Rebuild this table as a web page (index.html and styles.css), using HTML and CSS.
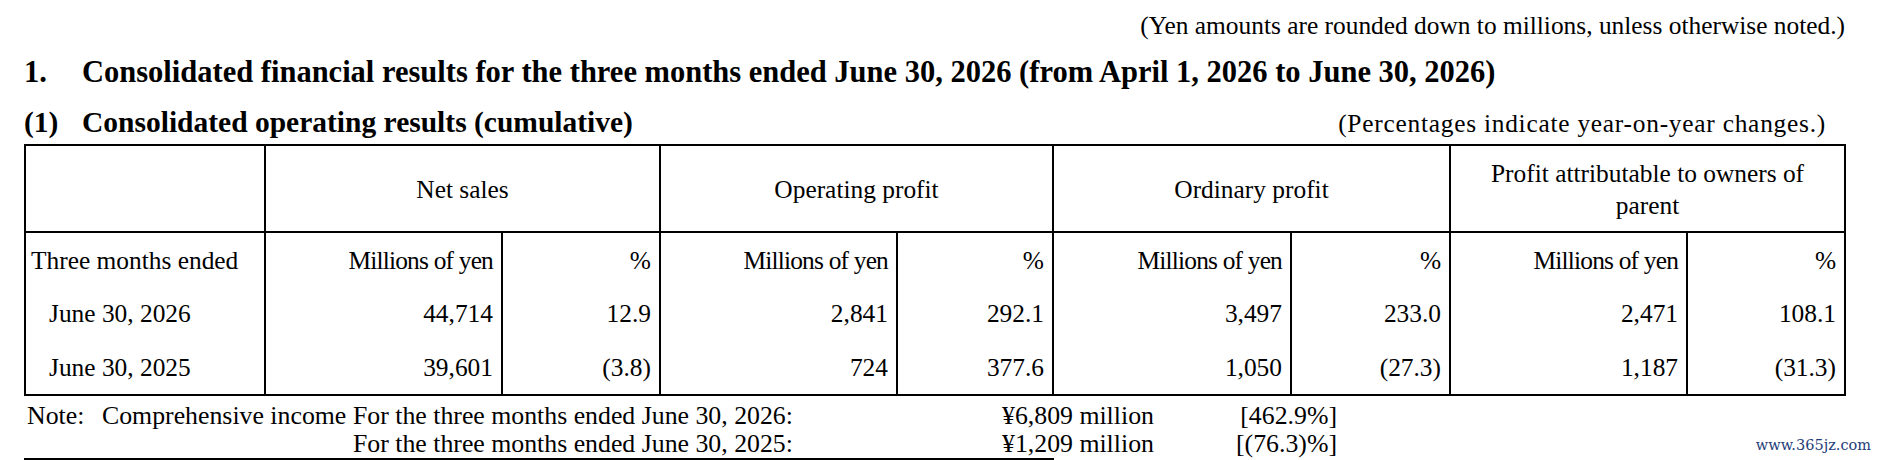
FILE: index.html
```html
<!DOCTYPE html>
<html lang="en">
<head>
<meta charset="utf-8">
<title>Consolidated financial results</title>
<link rel="stylesheet" href="styles.css">
</head>
<body>
<div class="page">
  <p class="unit-note">(Yen amounts are rounded down to millions, unless otherwise noted.)</p>
  <h1 class="heading h1"><span class="num">1.</span>Consolidated financial results for the three months ended June 30, 2026 (from April 1, 2026 to June 30, 2026)</h1>
  <div class="sub-row">
    <h2 class="heading h2"><span class="num">(1)</span>Consolidated operating results (cumulative)</h2>
    <span class="pct-note">(Percentages indicate year-on-year changes.)</span>
  </div>
  <table class="results">
    <colgroup>
      <col class="c-label">
      <col class="c-a1"><col class="c-p1">
      <col class="c-a2"><col class="c-p2">
      <col class="c-a3"><col class="c-p3">
      <col class="c-a4"><col class="c-p4">
    </colgroup>
    <thead>
      <tr class="r-head">
        <th></th>
        <th colspan="2">Net sales</th>
        <th colspan="2">Operating profit</th>
        <th colspan="2">Ordinary profit</th>
        <th colspan="2">Profit attributable to owners of<br>parent</th>
      </tr>
    </thead>
    <tbody>
      <tr class="r-sub">
        <td class="lbl">Three months ended</td>
        <td class="num-cell unit">Millions of yen</td><td class="num-cell">%</td>
        <td class="num-cell unit">Millions of yen</td><td class="num-cell">%</td>
        <td class="num-cell unit">Millions of yen</td><td class="num-cell">%</td>
        <td class="num-cell unit">Millions of yen</td><td class="num-cell">%</td>
      </tr>
      <tr class="r-data">
        <td class="lbl date">June 30, 2026</td>
        <td class="num-cell">44,714</td><td class="num-cell">12.9</td>
        <td class="num-cell">2,841</td><td class="num-cell">292.1</td>
        <td class="num-cell">3,497</td><td class="num-cell">233.0</td>
        <td class="num-cell">2,471</td><td class="num-cell">108.1</td>
      </tr>
      <tr class="r-data">
        <td class="lbl date">June 30, 2025</td>
        <td class="num-cell">39,601</td><td class="num-cell">(3.8)</td>
        <td class="num-cell">724</td><td class="num-cell">377.6</td>
        <td class="num-cell">1,050</td><td class="num-cell">(27.3)</td>
        <td class="num-cell">1,187</td><td class="num-cell">(31.3)</td>
      </tr>
    </tbody>
  </table>
  <div class="note">
    <span>Note:</span>
    <span>Comprehensive income</span>
    <span>For the three months ended June 30, 2026:</span>
    <span>¥6,809 million</span>
    <span class="br">[462.9%]</span>
    <span></span>
    <span></span>
    <span>For the three months ended June 30, 2025:</span>
    <span>¥1,209 million</span>
    <span class="br">[(76.3)%]</span>
  </div>
  <div class="watermark">www.365jz.com</div>
</div>
</body>
</html>
```

FILE: styles.css
```css
html, body {
  margin: 0;
  padding: 0;
  background: #ffffff;
}

body {
  font-family: "Liberation Serif", "Times New Roman", serif;
  color: #000000;
  font-size: 25.4px;
}

.page {
  position: relative;
  width: 1878px;
  height: 460px;
  padding: 10px 0 0 24px;
  box-sizing: border-box;
  overflow: hidden;
}

.unit-note {
  margin: 0;
  width: 1821px;
  text-align: right;
  line-height: 30px;
}

.heading {
  margin: 0;
  font-weight: bold;
  padding-left: 0;
}

.heading .num {
  display: inline-block;
  width: 58px;
}

.h1 {
  margin-top: 12px;
  font-size: 30.5px;
  line-height: 40px;
}

.h2 {
  font-size: 29.5px;
  line-height: 29px;
}

.sub-row {
  display: flex;
  justify-content: space-between;
  align-items: baseline;
  height: 29px;
  width: 1802px;
  margin-top: 16px;
}

.pct-note {
  line-height: 29px;
  letter-spacing: 0.75px;
}

.results {
  margin-top: 7px;
  border-collapse: collapse;
  table-layout: fixed;
  width: 1820px;
  border: 2px solid #000;
}

.results th,
.results td {
  border: 2px solid #000;
  padding: 0 8px 0 5px;
  vertical-align: middle;
  font-weight: normal;
  line-height: 32px;
}

.c-label { width: 240px; }
.c-a1 { width: 237px; }
.c-p1 { width: 158px; }
.c-a2 { width: 237px; }
.c-p2 { width: 156px; }
.c-a3 { width: 238px; }
.c-p3 { width: 159px; }
.c-a4 { width: 237px; }
.c-p4 { width: 158px; }

.r-head th {
  height: 85px;
  text-align: center;
  padding: 0 4px;
}

.r-sub td,
.r-data td {
  height: 54px;
  border-top: none;
  border-bottom: none;
}

.r-sub td {
  height: 53px;
  border-top: 2px solid #000;
}

.results tr:last-child td {
  border-bottom: 2px solid #000;
}

.num-cell {
  text-align: right;
}

.unit {
  letter-spacing: -0.8px;
}

.lbl {
  text-align: left;
}

.lbl.date {
  padding-left: 23px;
}

.note {
  display: grid;
  grid-template-columns: 75px 251px 649px 190px 145px;
  width: 1027px;
  padding: 6px 0 0 3px;
  font-size: 25.8px;
  line-height: 28px;
  border-bottom: 2px solid #000;
}

.note .br {
  text-align: right;
}

.watermark {
  position: absolute;
  right: 7px;
  bottom: 7px;
  font-family: "DejaVu Serif", serif;
  font-size: 14.5px;
  color: #1d3c78;
}
```
